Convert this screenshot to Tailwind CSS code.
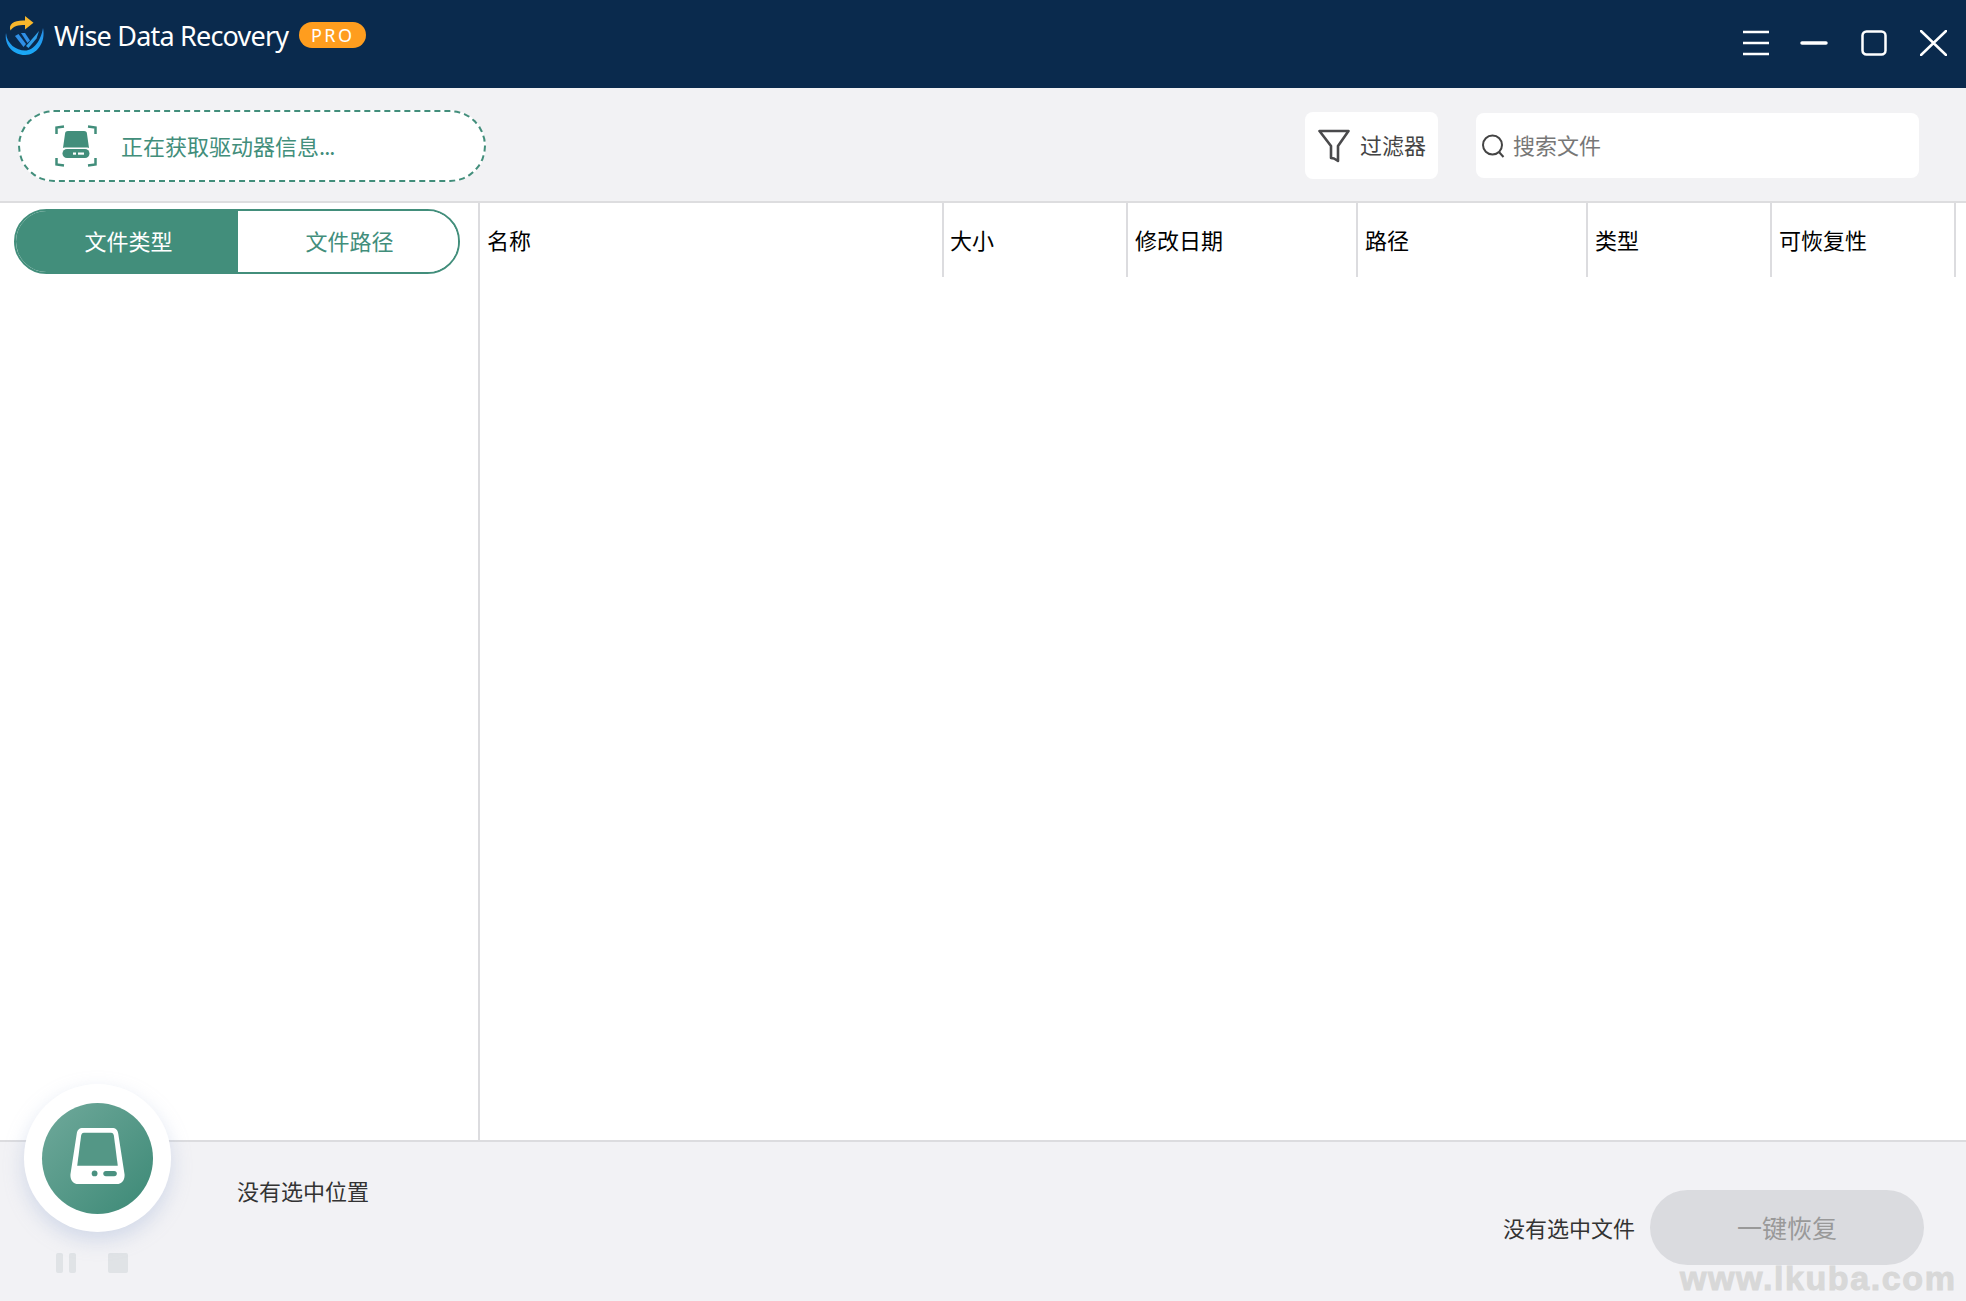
<!DOCTYPE html>
<html lang="zh-CN">
<head>
<meta charset="utf-8">
<script src="https://cdn.jsdelivr.net/npm/@tailwindcss/browser@4"></script>
</head>
<body class="m-0 bg-white">
<div class="relative w-[1966px] h-[1301px] overflow-hidden flex flex-col bg-white font-['Noto_Sans_CJK_SC','Noto_Sans',sans-serif]">

  <!-- title bar -->
  <header class="h-[88px] shrink-0 bg-[#0a2a4d] flex items-start text-white">
    <svg class="shrink-0 w-[46px] h-[58px]" viewBox="0 0 46 58" fill="none">
      <defs>
        <linearGradient id="lg" x1="0" y1="0" x2="0" y2="1"><stop offset="0" stop-color="#2a8fea"/><stop offset="1" stop-color="#19a9f7"/></linearGradient>
      </defs>
      <path d="M10.500 30.500 C8 24 14 20 25 20.500 L25 16 L33.500 22.700 L25 29.500 L25 25 C18 25 13.500 26 10.500 30.500Z" fill="#f8b72c"/>
      <path d="M6 33 C7 44 16 50.500 25 50.500 C34 50.500 41 40 43 28 C46 42 37 55 25 55 C13 55 4 45 6 33Z" fill="url(#lg)"/>
      <path d="M15 36 L18.500 34 L26 44 L23.500 47 Z" fill="#2f8fe6"/>
      <path d="M21 33 L25 33 L30 40.500 L27.500 43 Z" fill="#2f8fe6"/>
      <path d="M26 46 L39 31 L36.500 38.500 L28.500 48 Z" fill="#2f9fea"/>
    </svg>
    <span class="ml-[8px] mt-[15px] text-[27px] leading-[42px] font-['Noto_Sans',sans-serif] tracking-[-0.8px]">Wise Data Recovery</span>
    <span class="ml-[11px] mt-[22px] w-[67px] h-[26px] rounded-full bg-[#ff9d1e] text-[18px] leading-[26px] tracking-[2.5px] text-center font-['Noto_Sans',sans-serif]">PRO</span>
    <div class="ml-auto flex items-center h-[26px] mt-[30px] mr-[19px]">
      <svg class="w-[26px] h-[26px]" viewBox="0 0 26 26" stroke="#fff" stroke-width="2.500"><path d="M0 2h26M0 13h26M0 24h26"/></svg>
      <svg class="ml-[31px] w-[28px] h-[26px]" viewBox="0 0 28 26" stroke="#fff" stroke-width="3.500" stroke-linecap="round"><path d="M2 13h24"/></svg>
      <svg class="ml-[33px] w-[26px] h-[26px]" viewBox="0 0 26 26" fill="none" stroke="#fff" stroke-width="2.500"><rect x="1.500" y="1.500" width="23" height="23" rx="4"/></svg>
      <svg class="ml-[33px] w-[27px] h-[26px]" viewBox="0 0 27 26" stroke="#fff" stroke-width="2.500" stroke-linecap="round"><path d="M1 1l25 24M26 1L1 25"/></svg>
    </div>
  </header>

  <!-- toolbar -->
  <div class="h-[115px] shrink-0 bg-[#f2f2f4] border-b-2 border-[#dddddf] flex items-start">
    <div class="ml-[18px] mt-[22px] w-[468px] h-[72px] rounded-full border-2 border-dashed border-[#428e7b] bg-white flex items-center">
      <svg class="ml-[35px] w-[42px] h-[42px]" viewBox="0 0 42 42" fill="#428e7b">
        <path d="M1.500 9V2.500L9 1.500M33 1.500L40.500 2.500V9M40.500 33V39.500L33 40.500M9 40.500L1.500 39.500V33" fill="none" stroke="#428e7b" stroke-width="2.500"/>
        <path d="M13 6h16c2 0 3 1 3 3l2 14c-1-.5-2-.5-3-.5H11c-1 0-2 0-3 .5L10 9c0-2 1-3 3-3z"/>
        <rect x="7.500" y="24" width="27" height="9" rx="4.500"/>
        <rect x="18" y="27.500" width="3" height="2.200" fill="#fff"/><rect x="23" y="27.500" width="6" height="2.200" fill="#fff"/>
      </svg>
      <span class="ml-[24px] mb-[3px] text-[22px] leading-[30px] text-[#428e7b]">正在获取驱动器信息<span class="tracking-[-1px]">...</span></span>
    </div>
    <div class="ml-auto mt-[24px] w-[133px] h-[67px] rounded-[8px] bg-white flex items-center">
      <svg class="ml-[13px] w-[32px] h-[34px]" viewBox="0 0 32 34" fill="none" stroke="#4a4a4c" stroke-width="2.600" stroke-linejoin="round"><path d="M1.500 2h29L20 17v15l-4-2.500-3-.5V17z"/></svg>
      <span class="ml-[10px] mb-[4px] text-[22px] leading-[30px] text-[#444]">过滤器</span>
    </div>
    <div class="ml-[38px] mr-[47px] mt-[25px] w-[443px] h-[65px] rounded-[8px] bg-white flex items-center">
      <svg class="ml-[5px] w-[24px] h-[24px]" viewBox="0 0 24 24" fill="none" stroke="#444" stroke-width="2"><circle cx="11.500" cy="11" r="9.500"/><path d="M18 18l4.500 5"/></svg>
      <span class="ml-[8px] mb-[4px] text-[22px] leading-[30px] text-[#777]">搜索文件</span>
    </div>
  </div>

  <!-- main -->
  <main class="flex-1 flex min-h-0">
    <aside class="w-[480px] shrink-0 border-r-2 border-[#dcdcdf]">
      <div class="ml-[14px] mt-[6px] w-[446px] h-[65px] rounded-full border-2 border-[#428e7b] overflow-hidden flex text-[22px]">
        <div class="w-[222px] pl-[3px] pb-[2px] bg-[#428e7b] text-white flex items-center justify-center">文件类型</div>
        <div class="flex-1 pl-[3px] pb-[2px] bg-white text-[#428e7b] flex items-center justify-center">文件路径</div>
      </div>
    </aside>
    <div class="flex h-[74px] text-[22px] text-black">
      <div class="w-[464px] pl-[7px] pb-[2px] flex items-center border-r-2 border-[#dcdcdf]">名称</div>
      <div class="w-[184px] pl-[6px] pb-[2px] flex items-center border-r-2 border-[#dcdcdf]">大小</div>
      <div class="w-[230px] pl-[7px] pb-[2px] flex items-center border-r-2 border-[#dcdcdf]">修改日期</div>
      <div class="w-[230px] pl-[7px] pb-[2px] flex items-center border-r-2 border-[#dcdcdf]">路径</div>
      <div class="w-[184px] pl-[7px] pb-[2px] flex items-center border-r-2 border-[#dcdcdf]">类型</div>
      <div class="w-[184px] pl-[7px] pb-[2px] flex items-center border-r-2 border-[#dcdcdf]">可恢复性</div>
    </div>
  </main>

  <!-- footer -->
  <footer class="relative h-[161px] shrink-0 bg-[#f2f2f5] border-t-2 border-[#dcdcdf]">
    <div class="absolute left-[56px] top-[111px] flex">
      <div class="w-[7px] h-[20px] rounded-[2px] bg-[#e0e3e6]"></div>
      <div class="ml-[6px] w-[7px] h-[20px] rounded-[2px] bg-[#e0e3e6]"></div>
      <div class="ml-[32px] w-[20px] h-[20px] rounded-[2px] bg-[#e0e3e6]"></div>
    </div>
    <span class="absolute left-[237px] top-[33px] text-[22px] leading-[30px] text-[#333]">没有选中位置</span>
    <span class="absolute left-[1503px] top-[70px] text-[22px] leading-[30px] text-[#333]">没有选中文件</span>
    <div class="absolute left-[1650px] top-[48px] w-[274px] h-[75px] rounded-full bg-[#dadbdf] text-[25px] text-[#999] flex items-center justify-center">一键恢复</div>
    <span class="absolute left-[1680px] top-[118px] font-['Liberation_Sans',sans-serif] font-bold text-[34px] leading-[36px] tracking-[1.6px] [-webkit-text-stroke:1px_#d8d8d8] text-[#d8d8d8]">www.lkuba.com</span>
  </footer>

  <!-- floating drive button -->
  <div class="absolute left-[24px] top-[1084px] w-[147px] h-[148px] rounded-full bg-white shadow-[0_8px_20px_rgba(150,170,210,0.35)] flex items-center justify-center">
    <div class="w-[111px] h-[111px] rounded-full bg-gradient-to-br from-[#6fa99b] to-[#3b8976] flex items-center justify-center">
      <svg class="w-[55px] h-[56px] mb-[4px]" viewBox="0 0 56 58">
        <path d="M13 0h30c4 0 6 2 6.500 6L56 48c.5 6-3 10-8 10H8c-5 0-8.500-4-8-10L6.500 6C7 2 9 0 13 0z" fill="#fff"/>
        <path d="M14 5h28c2 0 2.500 1 3 3l4 31H7L11 8c.5-2 1-3 3-3z" fill="#549786"/>
        <circle cx="25" cy="47" r="3" fill="#4a9180"/><rect x="34" y="44.500" width="14" height="5.500" rx="2.750" fill="#4a9180"/>
      </svg>
    </div>
  </div>
</div>
</body>
</html>
